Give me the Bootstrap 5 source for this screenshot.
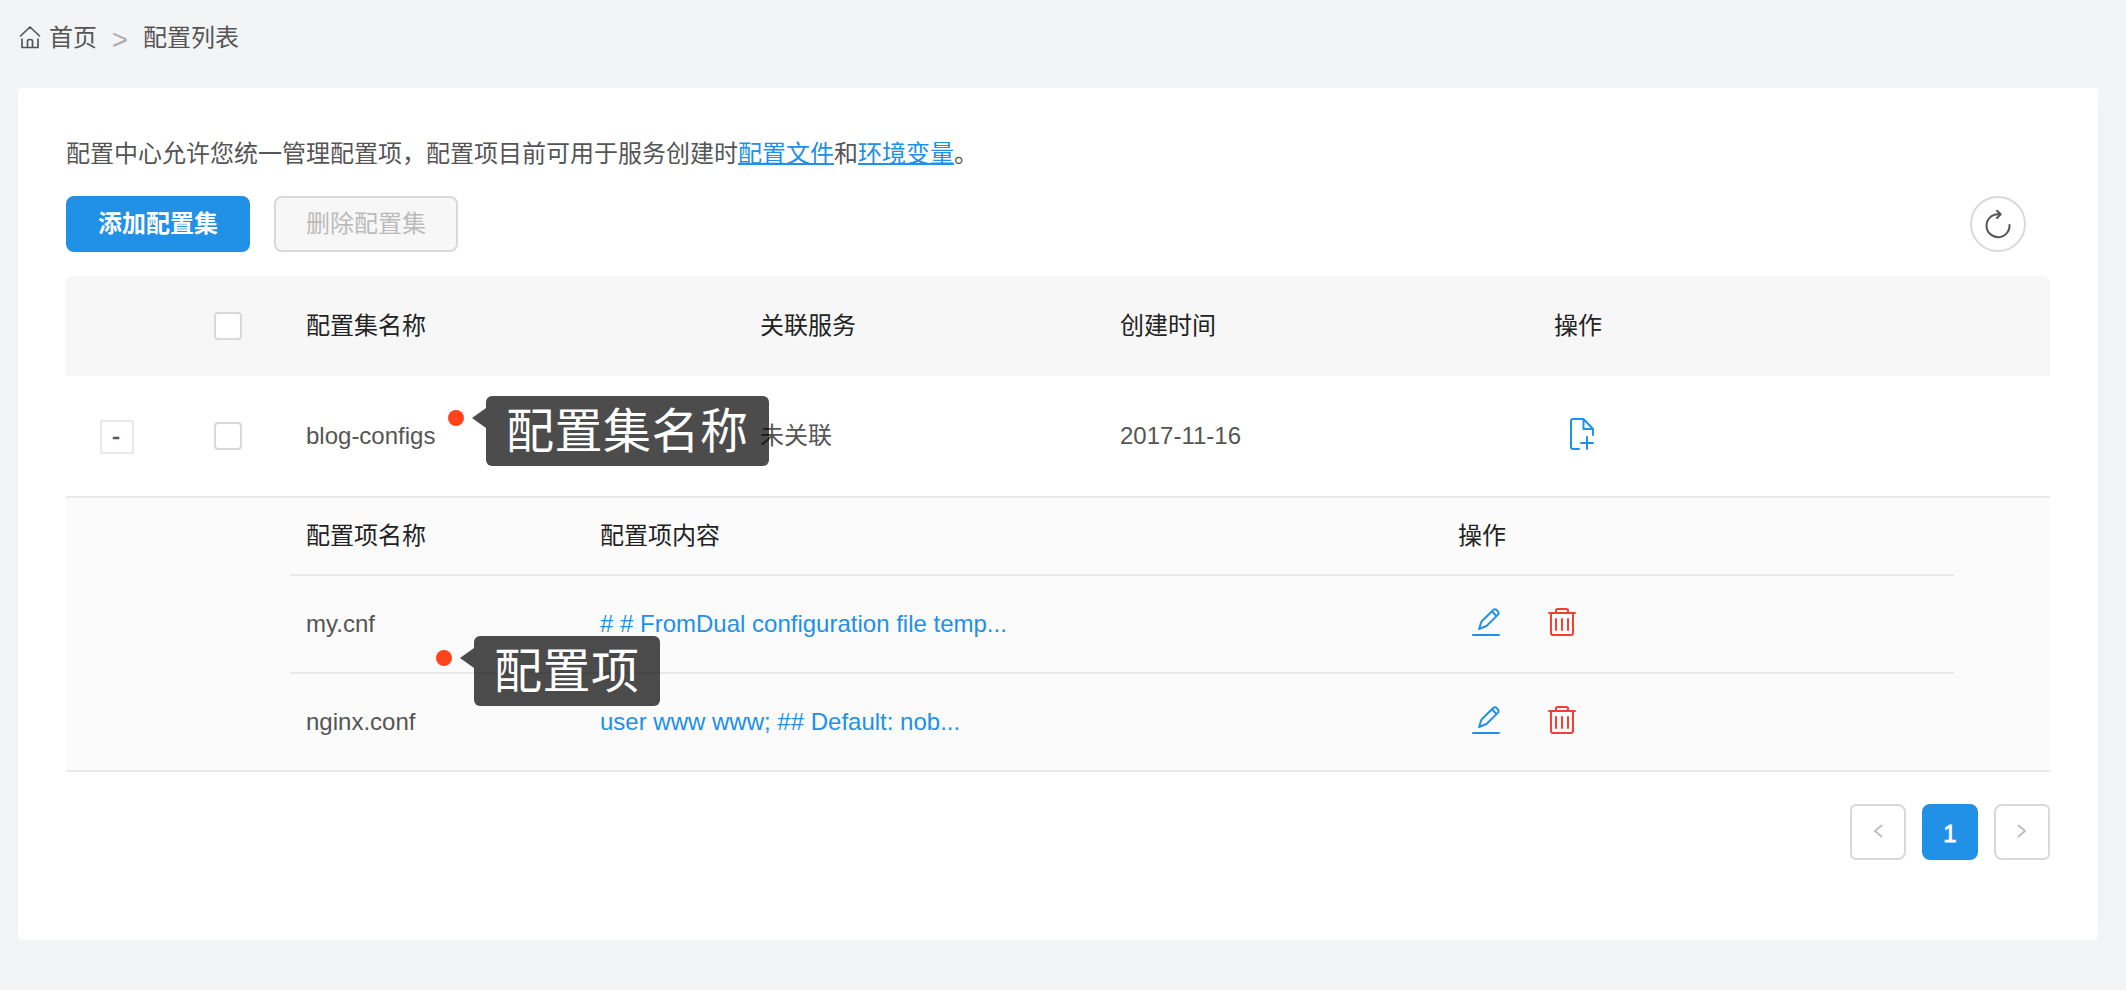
<!DOCTYPE html>
<html lang="zh-CN">
<head>
<meta charset="utf-8">
<meta name="viewport" content="width=device-width, initial-scale=1">
<title>配置列表</title>
<link href="https://cdn.jsdelivr.net/npm/bootstrap@5.3.0/dist/css/bootstrap.min.css" rel="stylesheet">
<style>
  body { background: #f2f4f6; color: #555; font: 24px/36px "Liberation Sans", "Noto Sans CJK SC", sans-serif; }
  svg { display: block; fill: none; stroke: currentColor; stroke-width: 2; stroke-linecap: round; stroke-linejoin: round; }
  .crumbs { height: 88px; padding: 0 18px 12px; }
  .crumbs .home { stroke-width: 1.7; margin: 0 7px 2px 0; }
  .crumbs .sep { width: 46px; color: #aaa; padding-top: 3px; font-size: 27px; }
  .panel { margin: 0 28px 0 18px; height: 852px; padding: 48px 48px 0; border-radius: 4px; box-shadow: 0 4px 20px rgba(0,0,0,.02); }
  .blue, .blue:hover { color: #2190e7; }
  .intro { height: 60px; }
  .intro a { text-decoration: underline; text-decoration-thickness: 2px; text-underline-offset: 1px; text-decoration-skip-ink: none; }
  .act { width: 184px; height: 56px; padding: 0; border-radius: 8px; font-size: 24px; line-height: 52px; border: 2px solid #d9d9d9; }
  .act-main, .act-main:hover { background: #2190e7; border-color: #2190e7; color: #fff; font-weight: 700; }
  .act-off:disabled { background: #f7f7f7; border-color: #d9d9d9; color: #bbb; opacity: 1; }
  .reload { width: 56px; height: 56px; margin-right: 24px; border: 2px solid #d9d9d9; color: #555; }
  .grid-row { display: grid; grid-template-columns: 240px 454px 360px 434px 1fr; align-items: center; }
  .grid-head { height: 100px; background: #f7f7f7; border-radius: 8px 8px 0 0; color: #222; margin-top: 24px; }
  .grid-main { height: 122px; border-bottom: 2px solid #e9e9e9; }
  .form-check-input.tick { width: 28px; height: 28px; margin: 0; border: 2px solid #d9d9d9; border-radius: 4px; }
  .fold { width: 34px; height: 34px; margin: 2px 80px 0 34px; padding-right: 2px; border: 2px solid #e9e9e9; line-height: 28px; text-align: center; -webkit-text-stroke: .5px #555; }
  .pad-l { width: 34px; margin-left: 34px; margin-right: 80px; }
  .nested { background: #fbfbfb; border-bottom: 2px solid #e9e9e9; padding: 0 96px 0 224px; }
  .sub-row { display: grid; grid-template-columns: 294px 858px 1fr; align-items: center; padding-left: 16px; height: 98px; border-bottom: 2px solid #e9e9e9; }
  .sub-row:last-child { height: 96px; border: 0; }
  .sub-head { height: 78px; color: #222; }
  .red { color: #f04134; }
  .tools { gap: 48px; padding: 0 0 4px 14px; }
  .pages { gap: 16px; margin-top: 32px; }
  .pages .page-link { width: 56px; height: 56px; padding: 0; border: 2px solid #d9d9d9; border-radius: 8px; color: #bbb; font-size: 24px; }
  .pages .active .page-link { background: #2190e7; border-color: #2190e7; color: #fff; -webkit-text-stroke: .8px #fff; padding-top: 3px; }
  .pages svg { stroke-width: 1.8; margin-bottom: 2px; stroke-linecap: butt; stroke-linejoin: miter; }
  .note { position: absolute; }
  .note::before { content: ""; position: absolute; left: 0; top: 14px; width: 16px; height: 16px; border-radius: 50%; background: #ff431a; }
  .note::after { content: ""; position: absolute; left: 24px; top: 12px; width: 14px; height: 20px; background: rgba(0,0,0,.7); clip-path: polygon(0 50%, 100% 0, 100% 100%); }
  .note span { display: block; margin-left: 38px; padding: 0 20px; height: 70px; line-height: 71px; border-radius: 6px; background: rgba(0,0,0,.7); color: #fff; font-size: 48px; letter-spacing: .5px; white-space: nowrap; }
  .note-set { left: 142px; top: -22px; }
  .note-item { left: 130px; top: 30px; }
</style>
</head>
<body>
<nav class="crumbs d-flex align-items-center">
  <svg class="home" width="24" height="24" viewBox="0 0 24 24"><path d="M2.500 11 12 2l9.500 9M4 14v8.500h16V14M9.500 22v-6q0-1.500 2.500-1.500t2.500 1.500v6"/></svg>
  <span>首页</span><span class="sep text-center">&gt;</span><span>配置列表</span>
</nav>
<main class="panel bg-white">
  <div class="intro">配置中心允许您统一管理配置项，配置项目前可用于服务创建时<a class="blue" href="#">配置文件</a>和<a class="blue" href="#">环境变量</a>。</div>
  <div class="d-flex gap-4">
    <button class="btn act act-main">添加配置集</button>
    <button class="btn act act-off" disabled>删除配置集</button>
    <button class="btn reload rounded-circle p-0 ms-auto d-flex align-items-center justify-content-center" aria-label="刷新">
      <svg width="28" height="30" viewBox="0 0 28 30"><path d="M25.500 16A11.500 11.500 0 1 1 14 5.200h2.500M13 1.700l3.700 3.500L13 9"/></svg>
    </button>
  </div>
  <section>
    <div class="grid-row grid-head">
      <div class="d-flex"><span class="pad-l"></span><input class="form-check-input tick" type="checkbox" aria-label="全选"></div>
      <div>配置集名称</div><div>关联服务</div><div>创建时间</div><div>操作</div>
    </div>
    <div class="grid-row grid-main">
      <div class="d-flex align-items-center"><span class="fold">-</span><input class="form-check-input tick" type="checkbox" aria-label="blog-configs"></div>
      <div class="position-relative">blog-configs<div class="note note-set"><span>配置集名称</span></div></div>
      <div>未关联</div><div>2017-11-16</div>
      <div class="blue ps-3 pb-1"><svg width="24" height="32" viewBox="0 0 24 32"><path d="M9 31H3q-2 0-2-2V3q0-2 2-2h10.500L23 11v6M13.500 1.500V11H23M17 19v12M11 25h12"/></svg></div>
    </div>
    <div class="nested">
      <div class="sub-row sub-head"><div>配置项名称</div><div>配置项内容</div><div>操作</div></div>
      <div class="sub-row">
        <div class="position-relative">my.cnf<div class="note note-item"><span>配置项</span></div></div>
        <div class="blue"># # FromDual configuration file temp...</div>
        <div class="tools d-flex">
          <svg class="blue" width="28" height="28" viewBox="0 0 28 28"><path d="M1 27h26M7 21l2.500-7.500L21.500 1.800q1.600-1.200 3.600.6t1.200 4L14.500 18zM20 3.500l4.500 4.500"/></svg>
          <svg class="red" width="28" height="28" viewBox="0 0 28 28"><path d="M1 5h26M8 5V2.500Q8 1 9.500 1h9Q20 1 20 2.500V5M3 5v20q0 2 2 2h18q2 0 2-2V5M8 11v11M14 11v11M20 11v11"/></svg>
        </div>
      </div>
      <div class="sub-row">
        <div>nginx.conf</div>
        <div class="blue">user www www; ## Default: nob...</div>
        <div class="tools d-flex">
          <svg class="blue" width="28" height="28" viewBox="0 0 28 28"><path d="M1 27h26M7 21l2.500-7.500L21.500 1.800q1.600-1.200 3.600.6t1.200 4L14.500 18zM20 3.500l4.500 4.500"/></svg>
          <svg class="red" width="28" height="28" viewBox="0 0 28 28"><path d="M1 5h26M8 5V2.500Q8 1 9.500 1h9Q20 1 20 2.500V5M3 5v20q0 2 2 2h18q2 0 2-2V5M8 11v11M14 11v11M20 11v11"/></svg>
        </div>
      </div>
    </div>
  </section>
  <ul class="pagination pages justify-content-end mb-0">
    <li class="page-item"><a class="page-link m-0 d-flex align-items-center justify-content-center" href="#" aria-label="上一页"><svg width="10" height="14" viewBox="0 0 10 14"><path d="M9 1 2 7l7 6"/></svg></a></li>
    <li class="page-item active"><a class="page-link m-0 d-flex align-items-center justify-content-center" href="#">1</a></li>
    <li class="page-item"><a class="page-link m-0 d-flex align-items-center justify-content-center" href="#" aria-label="下一页"><svg width="10" height="14" viewBox="0 0 10 14"><path d="m1 1 7 6-7 6"/></svg></a></li>
  </ul>
</main>
<script src="https://cdn.jsdelivr.net/npm/bootstrap@5.3.0/dist/js/bootstrap.bundle.min.js"></script>
</body>
</html>
